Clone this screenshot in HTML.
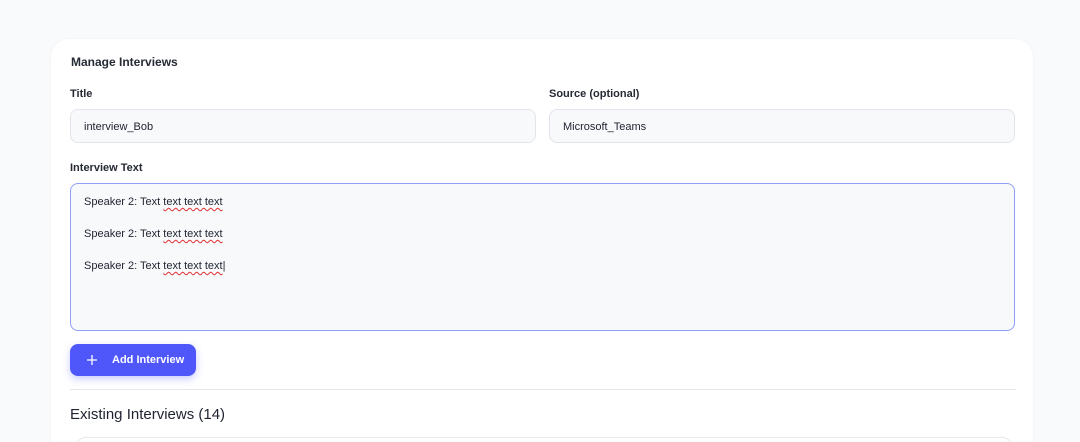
<!DOCTYPE html>
<html><head><style>
html,body{margin:0;width:1080px;height:442px;overflow:hidden}
body{background:#f9fafb;font-family:"Liberation Sans",sans-serif;color:#1f2330;position:relative}
.card{position:absolute;left:51px;top:39px;width:982px;height:420px;background:#fff;border-radius:18px;box-shadow:0 0 2px rgba(0,0,0,.05)}
.abs{position:absolute}
.lbl{font-size:11px;font-weight:bold;color:#262a35}
.inp{position:absolute;background:#f8f9fb;border:1px solid #e3e5ea;border-radius:8px;box-sizing:border-box;font-size:11px;padding-left:13px;line-height:34px;color:#1f2330}
.sq{text-decoration:underline wavy #e03030;text-decoration-thickness:1px;text-underline-offset:2px}
</style></head><body>
<div class="card"></div>
<div class="abs" style="left:71px;top:55px;font-size:12px;font-weight:bold;color:#262a35">Manage Interviews</div>
<div class="abs lbl" style="left:70px;top:88px">Title</div>
<div class="abs lbl" style="left:549px;top:88px">Source (optional)</div>
<div class="inp" style="left:70px;top:109px;width:466px;height:34px">interview_Bob</div>
<div class="inp" style="left:549px;top:109px;width:466px;height:34px">Microsoft_Teams</div>
<div class="abs lbl" style="left:70px;top:162px">Interview Text</div>
<div class="abs" style="left:70px;top:183px;width:945px;height:148px;box-sizing:border-box;border:1px solid #8ea0f4;border-radius:8px;background:#f8f9fb;font-size:11px">
<div class="abs" style="left:13px;top:12px">Speaker 2: Text <span class="sq">text text text</span></div>
<div class="abs" style="left:13px;top:44px">Speaker 2: Text <span class="sq">text text text</span></div>
<div class="abs" style="left:13px;top:76px">Speaker 2: Text <span class="sq">text text text</span>|</div>
</div>
<div class="abs" style="left:70px;top:344px;width:126px;height:32px;background:#4f57fb;border-radius:8px;box-shadow:0 3px 8px rgba(79,87,251,.3);color:#fff;font-size:11px;font-weight:bold">
<svg class="abs" style="left:17px;top:11px" width="10" height="10"><path d="M5 0V10M0 5H10" stroke="#fff" stroke-width="1.3"/></svg>
<span class="abs" style="left:42px;top:10px">Add Interview</span></div>
<div class="abs" style="left:70px;top:389px;width:946px;height:1px;background:#e5e7eb"></div>
<div class="abs" style="left:70px;top:406px;font-size:15px;color:#1f2330">Existing Interviews (14)</div>
<div class="abs" style="left:75px;top:437px;width:936px;height:20px;border:1px solid #e8e9ec;border-radius:12px"></div>
</body></html>
